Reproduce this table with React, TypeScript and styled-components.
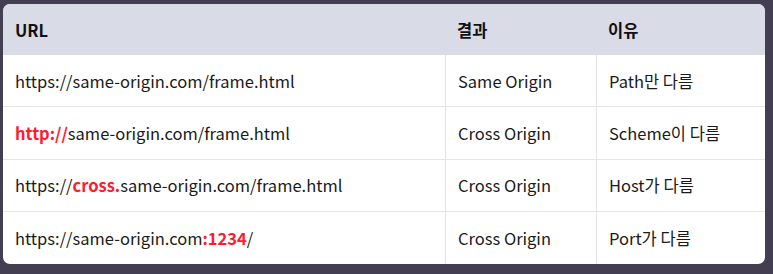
import styled, { createGlobalStyle } from "styled-components";

const GlobalStyle = createGlobalStyle`
	html, body {
		margin: 0;
		padding: 0;
		background: #433e52;
	}
	body {
		font-family: "Noto Sans CJK KR", "Noto Sans", sans-serif;
	}
`;

const Page = styled.div`
	width: 773px;
	height: 274px;
	box-sizing: border-box;
	padding: 4px 8px 10px 3px;
`;

const Card = styled.div`
	height: 100%;
	background: #ffffff;
	border-radius: 7px;
	overflow: hidden;
	display: grid;
	grid-template-columns: 442px 151px 1fr;
	grid-template-rows: 51px repeat(4, 1fr);
`;

const HeadCell = styled.div`
	background: #d9dbe7;
	display: flex;
	align-items: center;
	padding-left: 12px;
	font-size: 16.5px;
	font-weight: 700;
	color: #111111;
`;

const Cell = styled.div<{ $divider?: boolean; $last?: boolean }>`
	display: flex;
	align-items: center;
	padding-left: 12px;
	font-size: 16.5px;
	color: #1a1a1a;
	border-left: ${(p) => (p.$divider ? "1px solid #e4e4ec" : "none")};
	border-bottom: ${(p) => (p.$last ? "none" : "1px solid #e4e4ec")};
	white-space: nowrap;
`;

const Mark = styled.span`
	color: #ff1a2e;
	font-weight: 700;
`;

const rows = [
	{ url: <>https://same-origin.com/frame.html</>, result: "Same Origin", reason: "Path만 다름" },
	{ url: <><Mark>http://</Mark>same-origin.com/frame.html</>, result: "Cross Origin", reason: "Scheme이 다름" },
	{ url: <>https://<Mark>cross.</Mark>same-origin.com/frame.html</>, result: "Cross Origin", reason: "Host가 다름" },
	{ url: <>https://same-origin.com<Mark>:1234</Mark>/</>, result: "Cross Origin", reason: "Port가 다름" },
];

export default function App() {
	return (
		<Page>
			<GlobalStyle />
			<Card>
				<HeadCell>URL</HeadCell>
				<HeadCell>결과</HeadCell>
				<HeadCell>이유</HeadCell>
				{rows.map((row, i) => {
					const last = i === rows.length - 1;
					return [
						<Cell key={`u${i}`} $last={last}>{row.url}</Cell>,
						<Cell key={`r${i}`} $last={last} $divider>{row.result}</Cell>,
						<Cell key={`e${i}`} $last={last} $divider>{row.reason}</Cell>,
					];
				})}
			</Card>
		</Page>
	);
}
